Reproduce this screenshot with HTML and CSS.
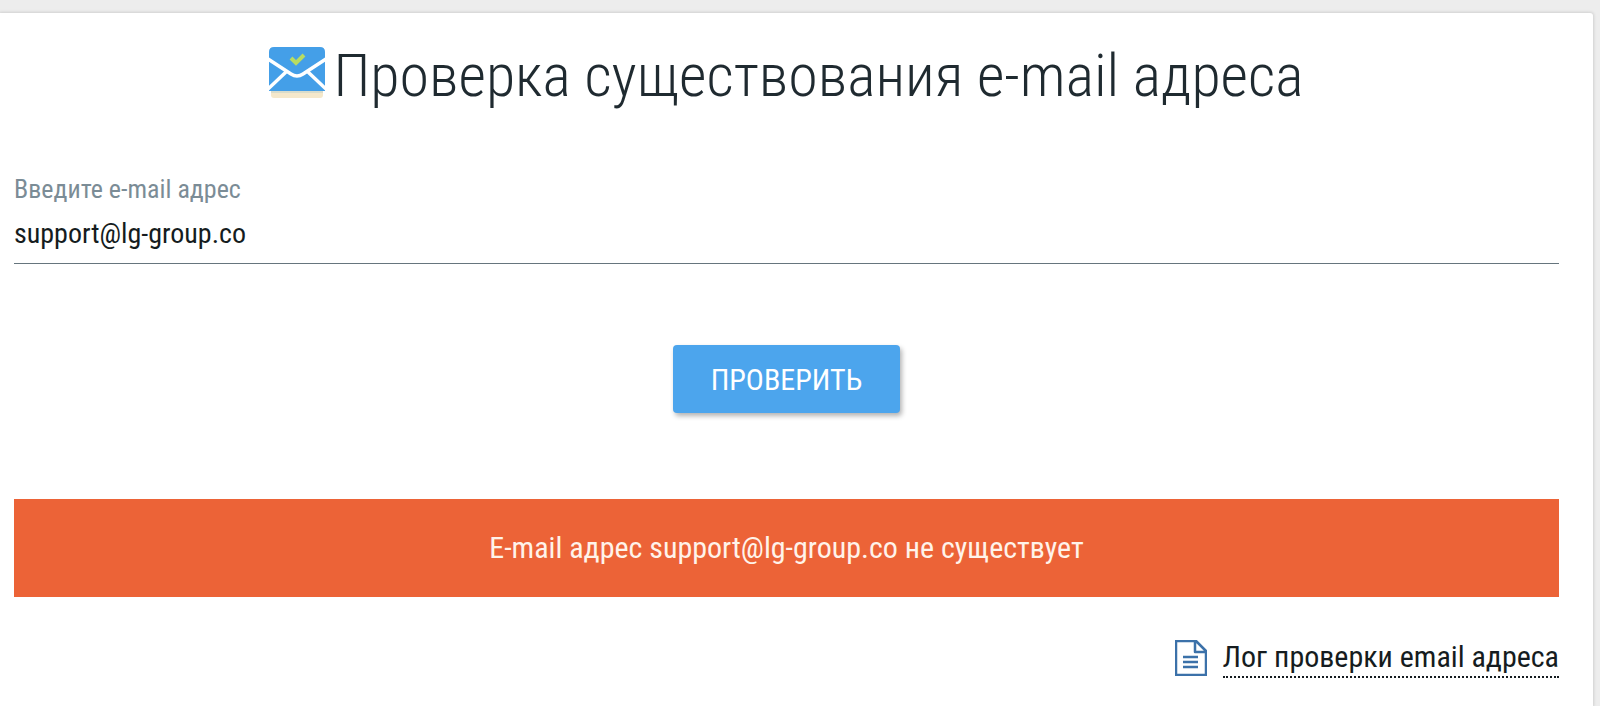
FILE: index.html
```html
<!DOCTYPE html>
<html lang="ru">
<head>
    <meta charset="UTF-8">
    <title>Проверка существования e-mail адреса</title>
    <meta name="viewport" content="width=device-width, initial-scale=1.0">
    <link rel="stylesheet" href="styles.css">
</head>
<body>
    <main class="card">
        <h1 class="title">
            <svg class="title-icon" viewBox="0 0 56 52" aria-hidden="true">
                <path fill="#f5e8cb" d="M2 44h52v4a3 3 0 0 1-3 3H5a3 3 0 0 1-3-3z"/>
                <path fill="#d9dccb" d="M2 44h52v2H2z"/>
                <path fill="#449fe8" d="M5 0h46q5 0 5 5v39H0V5q0-5 5-5z"/>
                <path fill="none" stroke="#fff" stroke-width="3.5" d="M-1 12L22 27Q28 31 34 27L57 12M17 25L-1 42M39 25L57 42"/>
                <path fill="none" stroke="#b8dc62" stroke-width="4" d="M22 11l5 5 8-8"/>
            </svg>
            <span>Проверка существования e-mail адреса</span>
        </h1>
        <form class="check-form" onsubmit="return false">
            <label for="email">Введите e-mail адрес</label>
            <input type="text" id="email" name="email" value="support@lg-group.co">
            <button type="submit" class="check-btn">ПРОВЕРИТЬ</button>
        </form>
        <div class="result" role="alert">E-mail адрес support@lg-group.co не существует</div>
        <div class="log-row">
            <svg class="log-icon" viewBox="0 0 32 36" aria-hidden="true">
                <path d="M1 1h20l10 10v24H1zM20 1v11h11M8 17h15M8 22h15M8 27h15"/>
            </svg>
            <a href="#log" class="log-link">Лог проверки email адреса</a>
        </div>
    </main>
</body>
</html>
```
FILE: styles.css
```css
* {
    box-sizing: border-box;
}
body {
    min-height: 100vh;
    margin: 0;
    padding: 13px 7px 0 0;
    display: flex;
    font-family: 'Roboto Condensed', Roboto, Arial, sans-serif;
    color: #151c20;
    background: #ededed;
}
.card {
    flex: 1;
    padding: 28px 34px 24px 14px;
    background: #fff;
    border-top-right-radius: 3px;
    box-shadow: 0 0 3px 1px rgba(0, 0, 0, 0.12);
}
.title {
    display: flex;
    justify-content: center;
    gap: 8px;
    margin: 0 0 61px;
    font-size: 60px;
    line-height: 70px;
    font-weight: 300;
    color: #1f2a30;
}
.title-icon {
    width: 56px;
    height: 52px;
    margin-top: 6px;
}
.check-form {
    display: flex;
    flex-direction: column;
}
.check-form label {
    font-size: 26px;
    line-height: 34px;
    color: #7b8c96;
}
#email {
    width: 100%;
    height: 58px;
    padding: 0 0 2px;
    border: none;
    border-bottom: 1px solid #66757d;
    outline: none;
    font-family: inherit;
    font-size: 28px;
    color: #151c20;
    background: none;
}
.check-btn {
    align-self: center;
    height: 68px;
    margin: 81px 0 86px;
    padding: 0 38px;
    border: none;
    border-radius: 4px;
    font-family: inherit;
    font-size: 30px;
    color: #fff;
    background: #4ca5ed;
    box-shadow: 2px 3px 5px rgba(0, 0, 0, 0.3);
    cursor: pointer;
}
.check-btn:hover {
    background: #3b98e3;
}
.result {
    padding: 31px 16px;
    font-size: 30px;
    line-height: 36px;
    text-align: center;
    color: #fff3ea;
    background: #ec6337;
}
.log-row {
    display: flex;
    justify-content: flex-end;
    align-items: center;
    gap: 16px;
    margin-top: 41px;
}
.log-icon {
    width: 32px;
    height: 36px;
    fill: none;
    stroke: #3b71a9;
    stroke-width: 2.5;
    stroke-linejoin: round;
}
.log-link {
    font-size: 30px;
    line-height: 38px;
    color: #151c20;
    text-decoration: none;
    border-bottom: 2px dotted #151c20;
}
```
